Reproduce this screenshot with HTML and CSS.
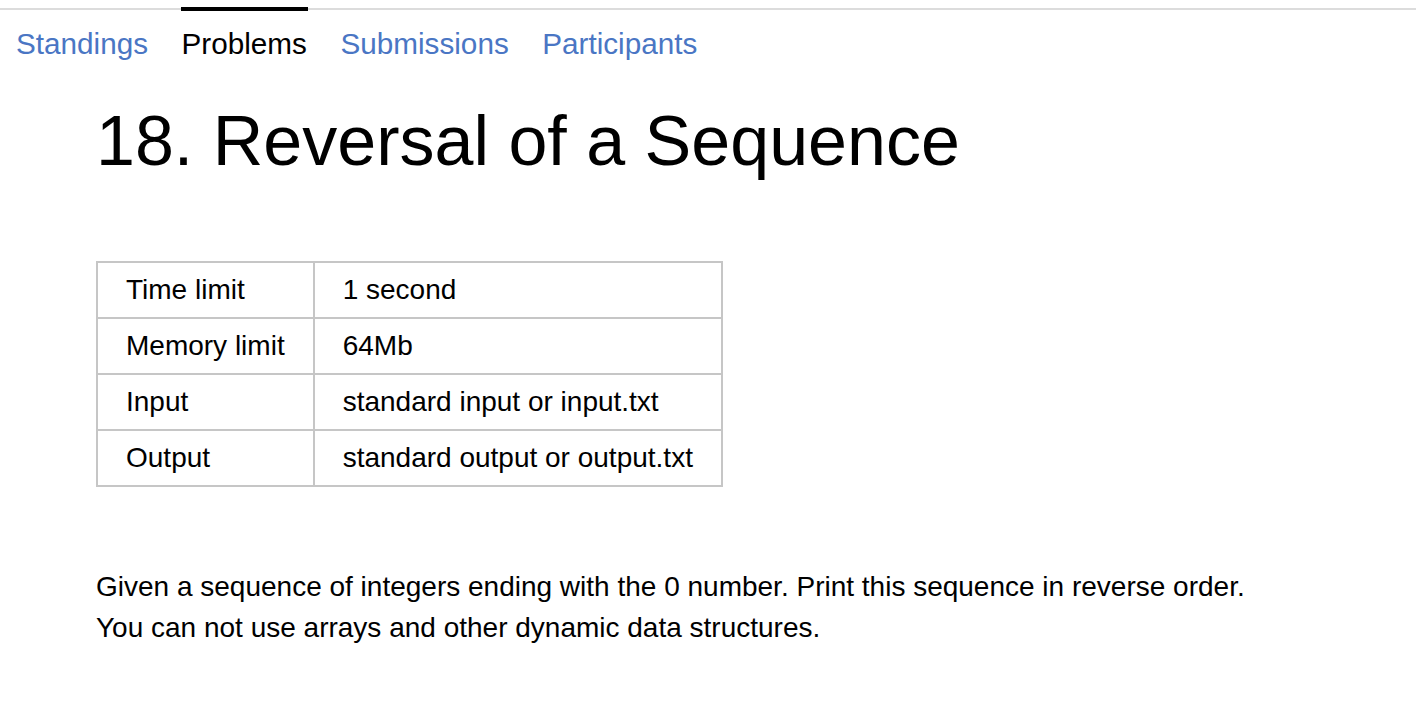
FILE: index.html
```html
<!DOCTYPE html>
<html lang="en">
<head>
<meta charset="utf-8">
<title>18. Reversal of a Sequence</title>
<link rel="stylesheet" href="styles.css">
</head>
<body>
<nav class="tabs">
  <a class="tab" href="#">Standings</a>
  <a class="tab tab-active" href="#">Problems</a>
  <a class="tab" href="#">Submissions</a>
  <a class="tab" href="#">Participants</a>
</nav>
<main class="content">
  <h1 class="title">18. Reversal of a Sequence</h1>
  <table class="limits">
    <tr><td class="label">Time limit</td><td>1 second</td></tr>
    <tr><td class="label">Memory limit</td><td>64Mb</td></tr>
    <tr><td class="label">Input</td><td>standard input or input.txt</td></tr>
    <tr><td class="label">Output</td><td>standard output or output.txt</td></tr>
  </table>
  <div class="statement">
    <p>Given a sequence of integers ending with the 0 number. Print this sequence in reverse order.<br>You can not use arrays and other dynamic data structures.</p>
  </div>
</main>
</body>
</html>
```
FILE: styles.css
```css
html, body {
  margin: 0;
  padding: 0;
  background: #fff;
}
body {
  font-family: "Liberation Sans", Arial, Helvetica, sans-serif;
  color: #000;
}
.tabs {
  margin-top: 8px;
  border-top: 2px solid #dcdcdc;
  display: flex;
  gap: 31.5px;
  padding-left: 15px;
}
.tab {
  margin-top: -3px;
  border-top: 4px solid transparent;
  padding: 16px 1px 0;
  font-size: 29.7px;
  line-height: 33px;
  color: #4a76c4;
  text-decoration: none;
}
.tab-active {
  color: #000;
  border-top-color: #000;
}
.content {
  padding-left: 96px;
}
.title {
  margin: 41px 0 0;
  font-size: 70px;
  font-weight: normal;
  line-height: 80px;
}
.limits {
  margin-top: 80px;
  border-collapse: collapse;
  font-size: 28px;
}
.limits td {
  border: 2px solid #c6c6c6;
  padding: 11px 28px;
  line-height: 32px;
  white-space: nowrap;
}
.statement p {
  margin: 79px 0 0;
  font-size: 28px;
  line-height: 41px;
}
```
